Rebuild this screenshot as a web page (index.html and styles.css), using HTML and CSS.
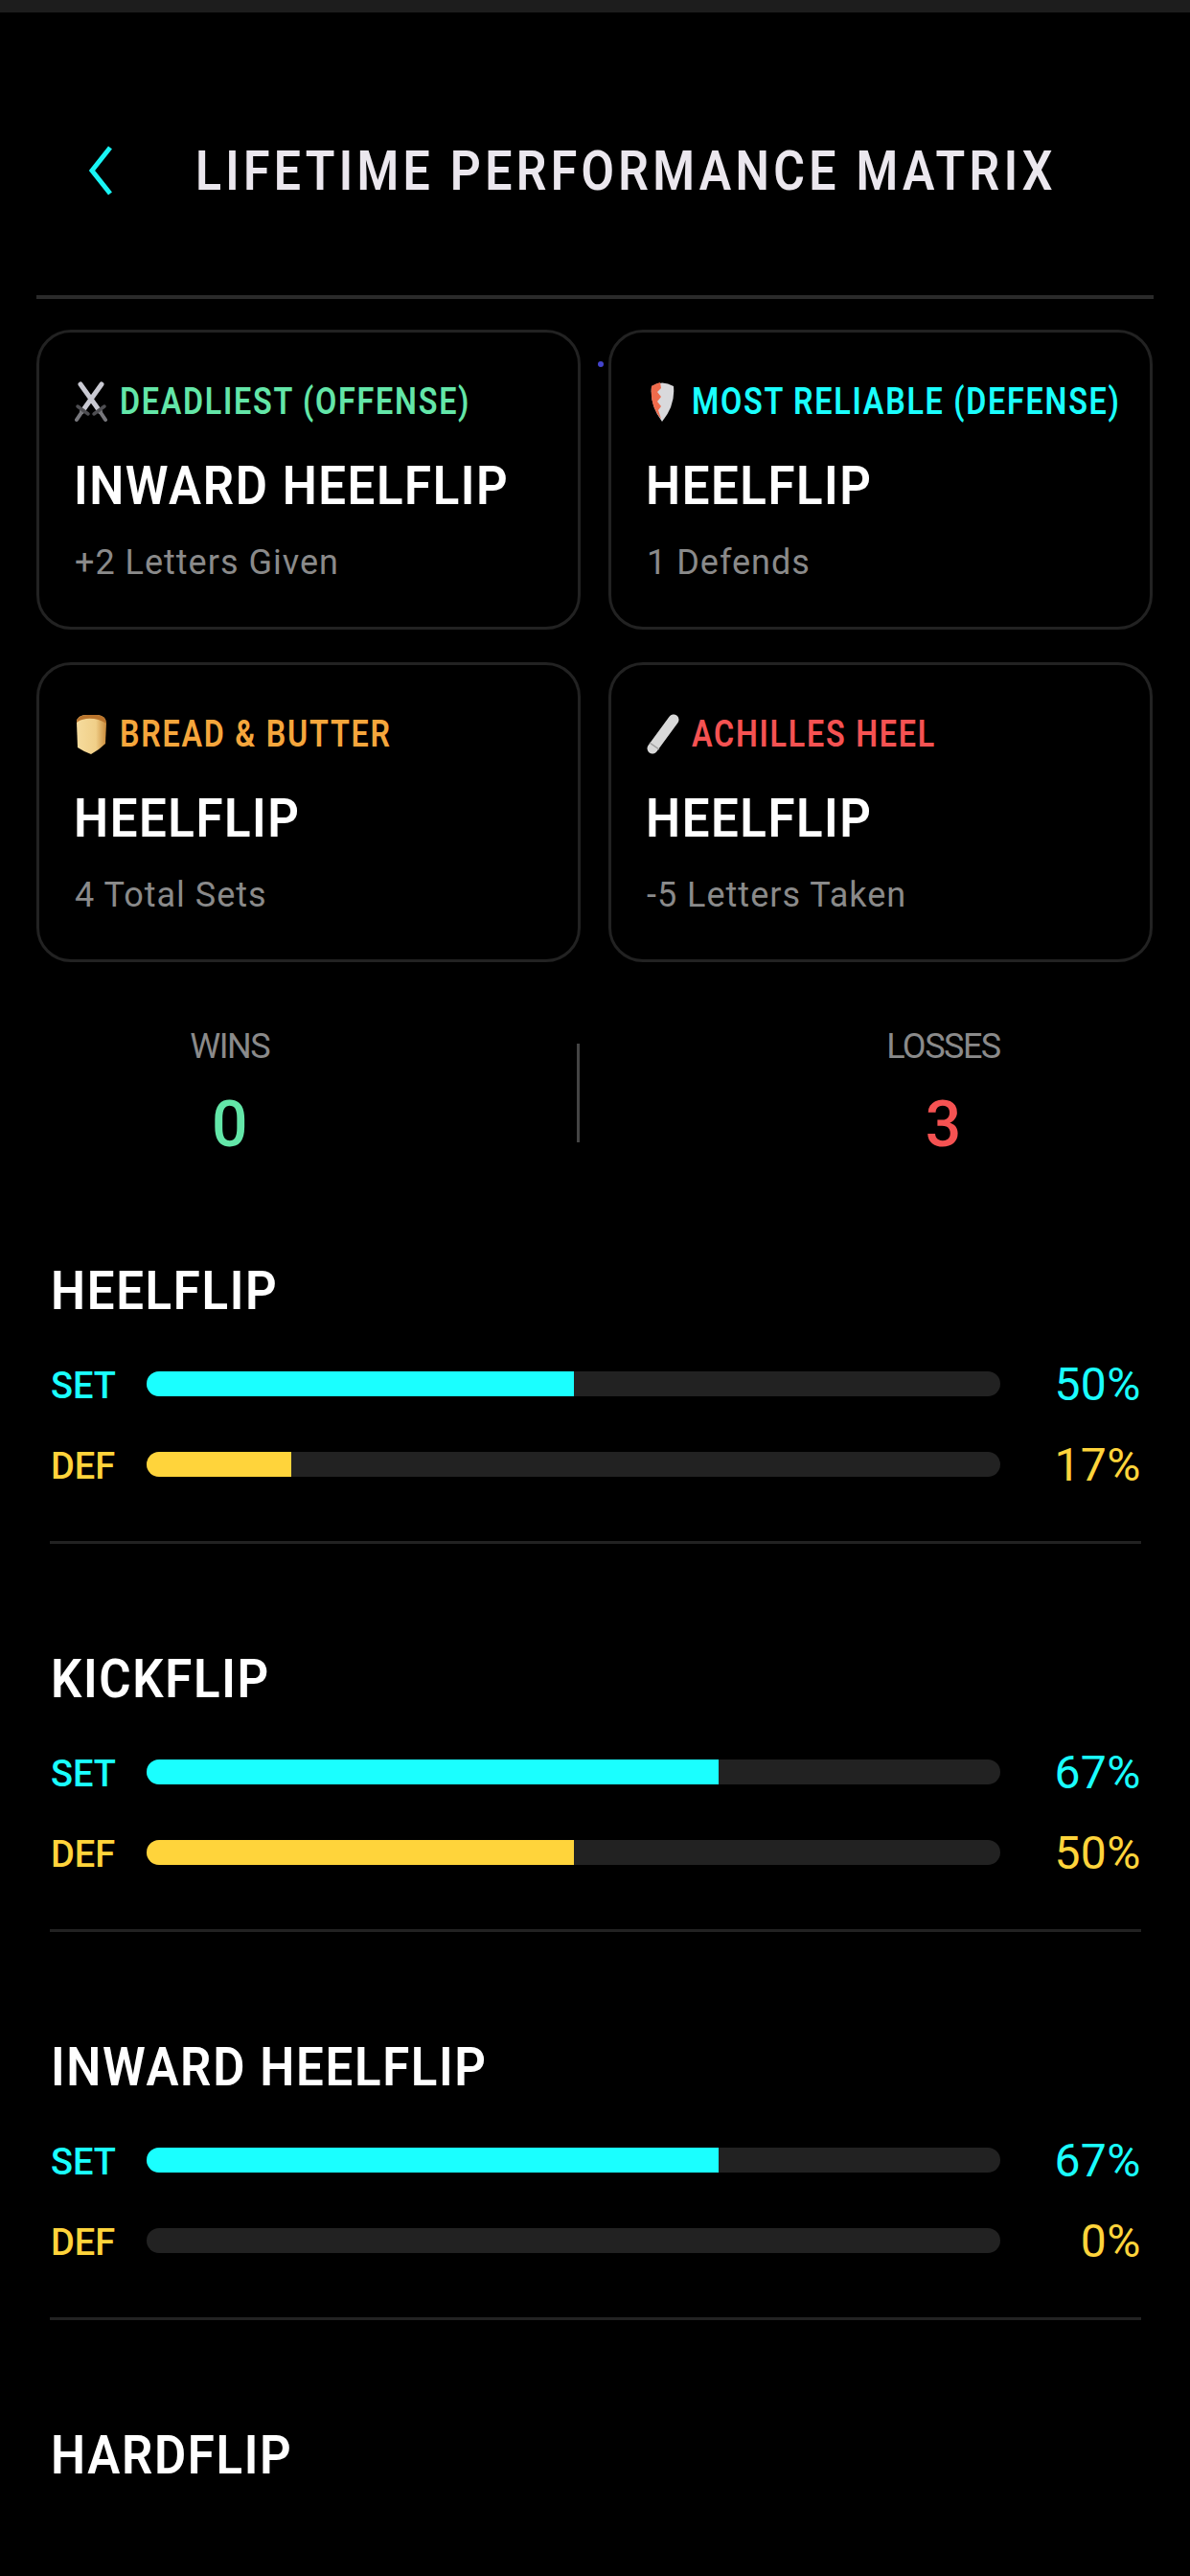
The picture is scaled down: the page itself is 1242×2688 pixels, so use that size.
FILE: index.html
```html
<!DOCTYPE html>
<html lang="en">
<head>
    <meta charset="UTF-8">
    <meta name="viewport" content="width=device-width, initial-scale=1.0">
    <title>Lifetime Performance Matrix</title>
    <link rel="stylesheet" href="styles.css">
</head>
<body>
    <div class="top-strip"></div>
    <div class="header">
        <svg class="back" viewBox="0 0 24 52"><path d="M22 2 L3 26 L22 50" fill="none" stroke="#19f5f5" stroke-width="5"/></svg>
        <div class="page-title">LIFETIME PERFORMANCE MATRIX</div>
    </div>

    <div class="cards">
        <div class="card">
            <div class="label green">
                <svg class="emoji" viewBox="0 0 36 44">
                    <path d="M6 4 L26 32 M28 4 L8 32" stroke="#c9c9d2" stroke-width="5" stroke-linecap="round"/>
                    <path d="M26 32 L32 41 M8 32 L2 41" stroke="#77777c" stroke-width="4" stroke-linecap="round"/>
                    <path d="M20 35 L31 27 M14 35 L3 27" stroke="#4e4e52" stroke-width="3.5" stroke-linecap="round"/>
                </svg>
                <span>DEADLIEST (OFFENSE)</span>
            </div>
            <div class="card-title">INWARD HEELFLIP</div>
            <div class="card-sub">+2 Letters Given</div>
        </div>
        <div class="card">
            <div class="label cyan">
                <svg class="emoji" viewBox="0 0 36 44">
                    <path d="M5 6 Q16 -1 28 6 Q30 26 16 43 Q3 26 5 6 Z" fill="#d9d9dc"/>
                    <path d="M5 6 Q10 3 14 2 L15 8 L11 12 L15 17 L11 22 L15 27 L12 31 L15 40 Q3 26 5 6 Z" fill="#ef6b4c"/>
                </svg>
                <span>MOST RELIABLE (DEFENSE)</span>
            </div>
            <div class="card-title">HEELFLIP</div>
            <div class="card-sub">1 Defends</div>
        </div>
        <div class="card">
            <div class="label orange">
                <svg class="emoji" viewBox="0 0 36 44">
                    <defs>
                        <linearGradient id="crumb" x1="0" y1="0" x2="1" y2="0">
                            <stop offset="0" stop-color="#f6dc9e"/>
                            <stop offset="0.65" stop-color="#f0cf88"/>
                            <stop offset="1" stop-color="#c98a3a"/>
                        </linearGradient>
                    </defs>
                    <path d="M2 10 Q2 2 13 2 L24 2 Q33 3 33 11 L32 32 Q26 38 17 43 Q9 40 3 36 Z" fill="url(#crumb)"/>
                    <path d="M2 10 Q2 2 13 2 L24 2 Q33 3 33 11 Q24 5 12 6 Q5 7 2 10 Z" fill="#b9742c"/>
                </svg>
                <span>BREAD &amp; BUTTER</span>
            </div>
            <div class="card-title">HEELFLIP</div>
            <div class="card-sub">4 Total Sets</div>
        </div>
        <div class="card">
            <div class="label red">
                <svg class="emoji" viewBox="0 0 36 44">
                    <path d="M6 37 L28 7" stroke="#d8d8d8" stroke-width="11" stroke-linecap="round"/>
                    <path d="M3 31 L13 38" stroke="#9c9c9c" stroke-width="1.5"/>
                </svg>
                <span>ACHILLES HEEL</span>
            </div>
            <div class="card-title">HEELFLIP</div>
            <div class="card-sub">-5 Letters Taken</div>
        </div>
        <div class="dot"></div>
    </div>

    <div class="stats">
        <div class="stat">
            <div class="stat-label">WINS</div>
            <div class="stat-value green">0</div>
        </div>
        <div class="stat-divider"></div>
        <div class="stat">
            <div class="stat-label">LOSSES</div>
            <div class="stat-value red">3</div>
        </div>
    </div>

    <div class="skills">
        <div class="skill">
            <div class="skill-name">HEELFLIP</div>
            <div class="row cyan">
                <div class="row-label">SET</div>
                <div class="track"><div class="fill fill-set" style="width: 50%"></div></div>
                <div class="row-value">50%</div>
            </div>
            <div class="row yellow">
                <div class="row-label">DEF</div>
                <div class="track"><div class="fill fill-def" style="width: 17%"></div></div>
                <div class="row-value">17%</div>
            </div>
        </div>
        <div class="skill">
            <div class="skill-name">KICKFLIP</div>
            <div class="row cyan">
                <div class="row-label">SET</div>
                <div class="track"><div class="fill fill-set" style="width: 67%"></div></div>
                <div class="row-value">67%</div>
            </div>
            <div class="row yellow">
                <div class="row-label">DEF</div>
                <div class="track"><div class="fill fill-def" style="width: 50%"></div></div>
                <div class="row-value">50%</div>
            </div>
        </div>
        <div class="skill">
            <div class="skill-name">INWARD HEELFLIP</div>
            <div class="row cyan">
                <div class="row-label">SET</div>
                <div class="track"><div class="fill fill-set" style="width: 67%"></div></div>
                <div class="row-value">67%</div>
            </div>
            <div class="row yellow">
                <div class="row-label">DEF</div>
                <div class="track"><div class="fill fill-def" style="width: 0%"></div></div>
                <div class="row-value">0%</div>
            </div>
        </div>
        <div class="skill-name">HARDFLIP</div>
    </div>
</body>
</html>
```

FILE: styles.css
```css
html, body {
    margin: 0;
    background-color: #000;
}
body {
    width: 1242px;
    height: 2688px;
    overflow: hidden;
    font-family: Roboto, "Liberation Sans", sans-serif;
    color: #fff;
}
.top-strip {
    height: 13px;
    background-color: #1d1d1d;
}
.header {
    display: flex;
    align-items: center;
    margin: 0 38px;
    padding: 120px 0 85px 55px;
    border-bottom: 4px solid #2a2a2a;
}
.back {
    width: 24px;
    height: 52px;
    margin-right: 87px;
}
/* the source picture is squeezed sideways, so the text is set narrow and pulled taller */
.page-title {
    font-size: 50px;
    line-height: 90px;
    font-weight: 600;
    letter-spacing: 4.3px;
    color: #ebe7ee;
    white-space: nowrap;
    transform: scaleY(1.16);
}
.cards {
    position: relative;
    display: grid;
    grid-template-columns: 568px 568px;
    gap: 34px 29px;
    margin: 32px 38px 0;
}
.card {
    height: 313px;
    box-sizing: border-box;
    padding: 47px 37px 0;
    border: 3px solid #222;
    border-radius: 36px;
}
.dot {
    position: absolute;
    left: 586px;
    top: 33px;
    width: 6px;
    height: 6px;
    border-radius: 50%;
    background-color: #4444cc;
}
.label {
    display: flex;
    align-items: center;
    height: 50px;
    font-size: 32.3px;
    font-weight: 600;
    letter-spacing: 1.75px;
    white-space: nowrap;
}
.label span {
    display: inline-block;
    transform: scaleY(1.176);
}
.emoji {
    width: 36px;
    height: 44px;
    margin-right: 11px;
    flex-shrink: 0;
}
.card-title {
    margin: 28px 0 0 -1px;
    font-size: 51px;
    line-height: 70px;
    font-weight: 600;
    letter-spacing: 1.55px;
    white-space: nowrap;
    transform: scaleY(1.098);
}
.card-sub {
    margin-top: 20px;
    font-size: 36px;
    line-height: 50px;
    letter-spacing: 1px;
    color: #8a8a8a;
}
.green { color: #63e6a8; }
.cyan { color: #1affff; }
.orange { color: #f5a63c; }
.red { color: #f55252; }
.yellow { color: #ffd43b; }
.stats {
    display: flex;
    justify-content: space-around;
    align-items: center;
    margin: 68px 38px 0;
}
.stat {
    text-align: center;
}
.stat-label {
    font-size: 36px;
    line-height: 40px;
    letter-spacing: -1.5px;
    color: #8a8a8a;
}
.stat-value {
    margin-top: 27px;
    font-size: 66px;
    line-height: 70px;
    font-weight: 500;
}
.stat-divider {
    width: 3px;
    height: 103px;
    background-color: #444;
}
.skills {
    margin: 103px 51px 0 52px;
}
.skill {
    margin-bottom: 106px;
    padding-bottom: 50px;
    border-bottom: 3px solid #222;
}
.skill-name {
    font-size: 51px;
    line-height: 70px;
    font-weight: 600;
    letter-spacing: 1.65px;
    padding-left: 1px;
    transform: scaleY(1.098);
}
.row {
    display: flex;
    align-items: center;
    height: 60px;
    margin-top: 24px;
}
.skill-name + .row {
    margin-top: 32px;
}
.row-label {
    width: 101px;
    padding: 4px 0 0 1px;
    box-sizing: border-box;
    font-size: 38px;
    font-weight: 500;
}
.track {
    width: 891px;
    height: 26px;
    border-radius: 13px;
    background-color: #222;
    overflow: hidden;
}
.fill {
    height: 100%;
}
.fill-set { background-color: #1affff; }
.fill-def { background-color: #ffd43b; }
.row-value {
    flex: 1;
    text-align: right;
    font-size: 48px;
    font-weight: 400;
    letter-spacing: 0.5px;
}
```
